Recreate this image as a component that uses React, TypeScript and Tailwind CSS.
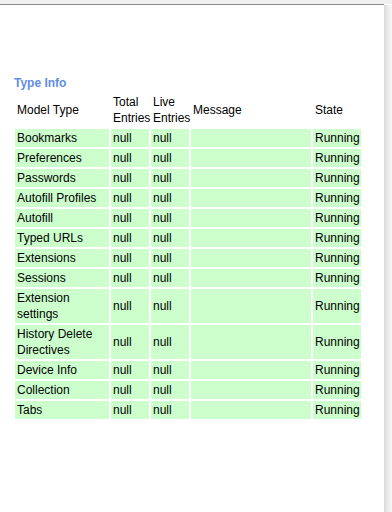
import React from 'react';

const rows: string[] = [
  'Bookmarks',
  'Preferences',
  'Passwords',
  'Autofill Profiles',
  'Autofill',
  'Typed URLs',
  'Extensions',
  'Sessions',
  'Extension settings',
  'History Delete Directives',
  'Device Info',
  'Collection',
  'Tabs',
];

export default function App() {
  return (
    <div className="w-[392px] h-[512px] bg-white flex flex-col font-['Liberation_Sans',Arial,sans-serif] text-[12px] text-black overflow-hidden">
      {/* Top strip */}
      <div className="h-[4px] bg-[#f0f0f0]" />
      <div className="h-px bg-[#8c8c8c] mr-[8px]" />

      <div className="flex flex-1">
        <div className="w-[384px] pt-[70px] pl-[14px]">
          <div className="h-[16px] leading-[16px] font-bold text-[#5f8de8]">Type Info</div>

          <table className="table-fixed w-[350px] -ml-[1px] border-separate border-spacing-[2px]">
            <colgroup>
              <col className="w-[94px]" />
              <col className="w-[38px]" />
              <col className="w-[38px]" />
              <col className="w-[120px]" />
              <col className="w-[48px]" />
            </colgroup>
            <thead>
              <tr className="text-left align-middle">
                <th className="font-normal p-px pl-[2px] leading-[16px]">Model Type</th>
                <th className="font-normal p-px pl-[2px] leading-[16px]">Total Entries</th>
                <th className="font-normal p-px pl-[2px] leading-[16px]">Live Entries</th>
                <th className="font-normal p-px pl-[2px] leading-[16px]">Message</th>
                <th className="font-normal p-px pl-[2px] leading-[16px]">State</th>
              </tr>
            </thead>
            <tbody>
              {rows.map(name => (
                <tr key={name} className="bg-[#ccffcc] align-middle">
                  <td className="p-px pl-[2px] leading-[16px]">{name}</td>
                  <td className="p-px pl-[2px] leading-[16px]">null</td>
                  <td className="p-px pl-[2px] leading-[16px]">null</td>
                  <td className="p-px leading-[16px]"></td>
                  <td className="p-px pl-[2px] leading-[16px]">Running</td>
                </tr>
              ))}
            </tbody>
          </table>
        </div>
        {/* Right edge shadow */}
        <div className="w-[8px] bg-gradient-to-r from-[#d9d9d9] via-[#ececec] to-[#f6f6f6]" />
      </div>
    </div>
  );
}
